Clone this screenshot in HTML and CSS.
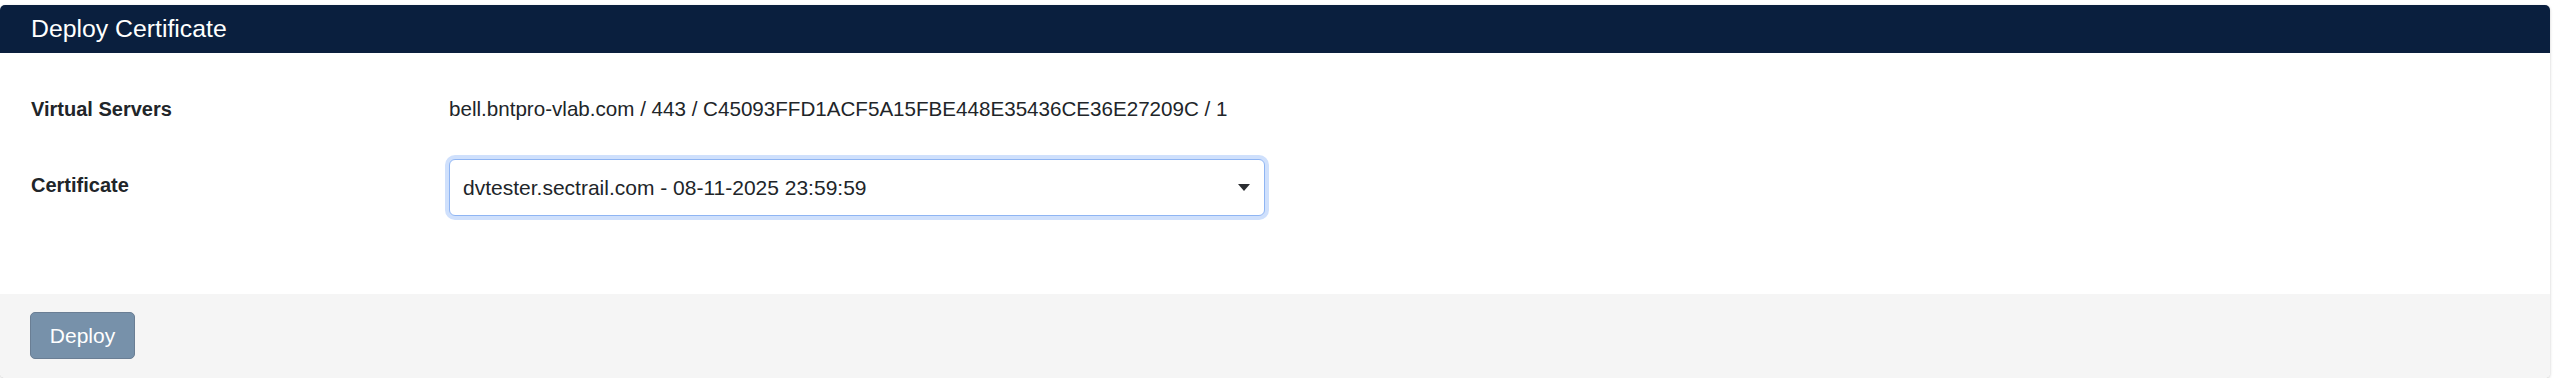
FILE: index.html
```html
<!DOCTYPE html>
<html lang="en">
<head>
<meta charset="utf-8">
<title>Deploy Certificate</title>
<link rel="stylesheet" href="styles.css">
</head>
<body>
<div class="card">
  <div class="card-header">Deploy Certificate</div>
  <div class="card-body">
    <div class="form-row">
      <div class="label">Virtual Servers</div>
      <div class="value">bell.bntpro-vlab.com / 443 / C45093FFD1ACF5A15FBE448E35436CE36E27209C / 1</div>
    </div>
    <div class="form-row form-row-select">
      <div class="label label-form">Certificate</div>
      <div class="select-wrap">
        <select class="select">
          <option>dvtester.sectrail.com - 08-11-2025 23:59:59</option>
        </select>
        <svg class="caret" width="12" height="7" viewBox="0 0 12 7"><path d="M0 0 H12 L6 7 Z" fill="#2b2d31"/></svg>
      </div>
    </div>
  </div>
  <div class="card-footer">
    <button class="btn" type="button">Deploy</button>
  </div>
</div>
</body>
</html>
```
FILE: styles.css
```css
html, body {
  margin: 0;
  padding: 0;
  background: #ffffff;
}
body {
  padding-top: 5px;
  font-family: "Liberation Sans", Arial, Helvetica, sans-serif;
  color: #212529;
}
.card {
  width: 2550px;
  border-radius: 5px;
  background: #ffffff;
  box-shadow: 0 1px 3px rgba(0, 0, 0, 0.22);
  overflow: hidden;
}
.card-header {
  height: 48px;
  display: flex;
  align-items: center;
  padding-left: 31px;
  background: #0a1f3e;
  color: #ffffff;
  font-size: 24.8px;
}
.card-body {
  padding: 41px 30px 0 31px;
  height: 200px;
}
.form-row {
  display: grid;
  grid-template-columns: 418px 1fr;
  font-size: 20px;
  line-height: 30px;
}
.value {
  font-size: 20.6px;
}
.form-row-select {
  margin-top: 35px;
}
.label {
  font-weight: bold;
}
.label-form {
  padding-top: 11px;
}
.select-wrap {
  position: relative;
  width: 816px;
}
.select {
  -webkit-appearance: none;
  appearance: none;
  width: 816px;
  height: 57px;
  box-sizing: border-box;
  padding: 0 40px 0 13px;
  border: 1.5px solid #8fb5f3;
  border-radius: 6px;
  box-shadow: 0 0 0 4px #cfe0fc;
  background: #ffffff;
  font-family: "Liberation Sans", Arial, Helvetica, sans-serif;
  font-size: 21px;
  color: #212529;
  outline: none;
}
.caret {
  position: absolute;
  right: 15px;
  top: 25px;
}
.card-footer {
  height: 84px;
  box-sizing: border-box;
  padding: 18px 30px 0 30px;
  background: #f5f5f5;
}
.btn {
  height: 47px;
  width: 105px;
  box-sizing: border-box;
  padding: 0;
  border: 1px solid #6a7e94;
  border-radius: 5px;
  background: #7791aa;
  color: #ffffff;
  font-family: "Liberation Sans", Arial, Helvetica, sans-serif;
  font-size: 21px;
}
```
